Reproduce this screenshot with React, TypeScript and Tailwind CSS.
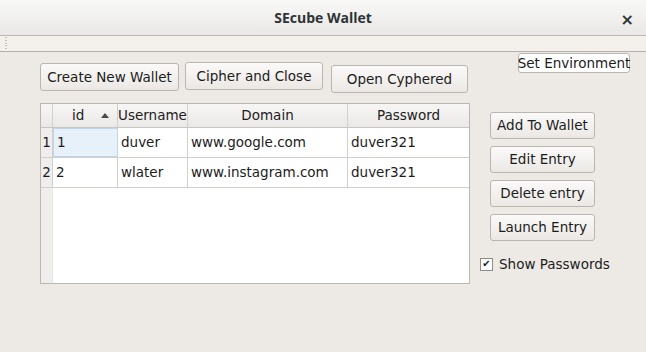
const rows = [
  { n: "1", id: "1", user: "duver", domain: "www.google.com", pass: "duver321" },
  { n: "2", id: "2", user: "wlater", domain: "www.instagram.com", pass: "duver321" },
]

function QtButton({ label, className = "" }: { label: string; className?: string }) {
  return (
    <button
      className={`flex items-center justify-center whitespace-nowrap rounded-[3px] border border-[#b9b5b0] bg-gradient-to-b from-[#fbfaf9] to-[#ebe8e4] text-[13.5px] text-[#1c1c1c] ${className}`}
    >
      {label}
    </button>
  )
}

export default function App() {
  return (
    <div
      className="flex h-[352px] w-[646px] flex-col bg-[#edeae6] text-[#1c1c1c]"
      style={{ fontFamily: '"DejaVu Sans", sans-serif' }}
    >
      {/* title bar */}
      <div className="relative flex h-[36px] items-center justify-center border-b border-[#bdbab6] bg-gradient-to-b from-[#f8f8f7] to-[#e9e8e7]">
        <span className="text-[14px] font-bold text-[#2e3436]" style={{ fontFamily: '"Open Sans", sans-serif' }}>
          SEcube Wallet
        </span>
        <span className="absolute right-[12px] top-[8px] text-[16px] font-bold text-[#2e3436]">×</span>
      </div>

      {/* toolbar strip */}
      <div className="flex h-[16px] border-b border-[#b3afab] bg-[#f4f1ed] pl-[5px]">
        <div className="grid h-full w-[3px] grid-rows-5 content-center gap-[1px] py-[1px]">
          {[0, 1, 2, 3, 4].map((i) => (
            <div key={i} className="h-[1px] w-[2px] bg-[#c4c0bb]" />
          ))}
        </div>
      </div>

      {/* content */}
      <div className="flex flex-1">
        <div className="ml-[40px] flex w-[430px] flex-col">
          <div className="flex items-start">
            <QtButton label="Create New Wallet" className="mt-[11px] h-[28px] w-[139px]" />
            <QtButton label="Cipher and Close" className="ml-[6px] mt-[10px] h-[28px] w-[138px]" />
            <QtButton label="Open Cyphered" className="ml-[8px] mt-[13px] h-[28px] w-[137px]" />
          </div>

          {/* table */}
          <div className="mt-[10px] flex h-[181px] flex-col border border-[#bab6b2] bg-white text-[13.5px]">
            <div className="grid h-[24px] grid-cols-[12px_65px_70px_160px_121px] border-b border-[#c9c5c1] bg-gradient-to-b from-[#f7f6f5] to-[#ebe9e7]">
              <div className="border-r border-[#d3d0cc]" />
              <div className="relative flex items-center border-r border-[#d3d0cc] pl-[19px]">
                id
                <span className="absolute right-[8px] top-[9px] h-0 w-0 border-x-[4px] border-b-[5px] border-x-transparent border-b-[#4a4a4a]" />
              </div>
              <div className="flex items-center justify-center overflow-hidden border-r border-[#d3d0cc]">Username</div>
              <div className="flex items-center justify-center border-r border-[#d3d0cc]">Domain</div>
              <div className="flex items-center justify-center">Password</div>
            </div>
            {rows.map((r, i) => (
              <div key={r.n} className="grid h-[30px] grid-cols-[12px_65px_70px_160px_121px] border-b border-[#d3d0cc]">
                <div className="flex items-center justify-center border-r border-[#d3d0cc] bg-[#f0eeec]">{r.n}</div>
                <div
                  className={`flex items-center pl-[3px] ${
                    i === 0 ? "border border-[#c0d5e8] bg-[#e6f1fa]" : "border-r border-[#d3d0cc]"
                  }`}
                >
                  {r.id}
                </div>
                <div className="flex items-center border-r border-[#d3d0cc] pl-[3px]">{r.user}</div>
                <div className="flex items-center border-r border-[#d3d0cc] pl-[3px]">{r.domain}</div>
                <div className="flex items-center pl-[3px]">{r.pass}</div>
              </div>
            ))}
            <div className="flex flex-1">
              <div className="w-[12px] border-r border-[#ebe9e6] bg-[#f0eeec]" />
            </div>
          </div>
        </div>

        <div className="ml-[10px] flex flex-col items-start">
          <QtButton label="Set Environment" className="ml-[38px] mt-[1px] h-[20px] w-[112px] rounded-[2px] bg-none bg-white" />
          <div className="ml-[10px] mt-[39px] flex flex-col gap-[7px]">
            <QtButton label="Add To Wallet" className="h-[27px] w-[105px]" />
            <QtButton label="Edit Entry" className="h-[27px] w-[105px]" />
            <QtButton label="Delete entry" className="h-[27px] w-[105px]" />
            <QtButton label="Launch Entry" className="h-[27px] w-[105px]" />
          </div>
          <label className="mt-[13px] flex items-center gap-[6px] text-[13.5px]">
            <span className="flex h-[13px] w-[13px] items-center justify-center border border-[#8f8b87] bg-white text-[10px] leading-none">
              ✔
            </span>
            Show Passwords
          </label>
        </div>
      </div>
    </div>
  )
}
